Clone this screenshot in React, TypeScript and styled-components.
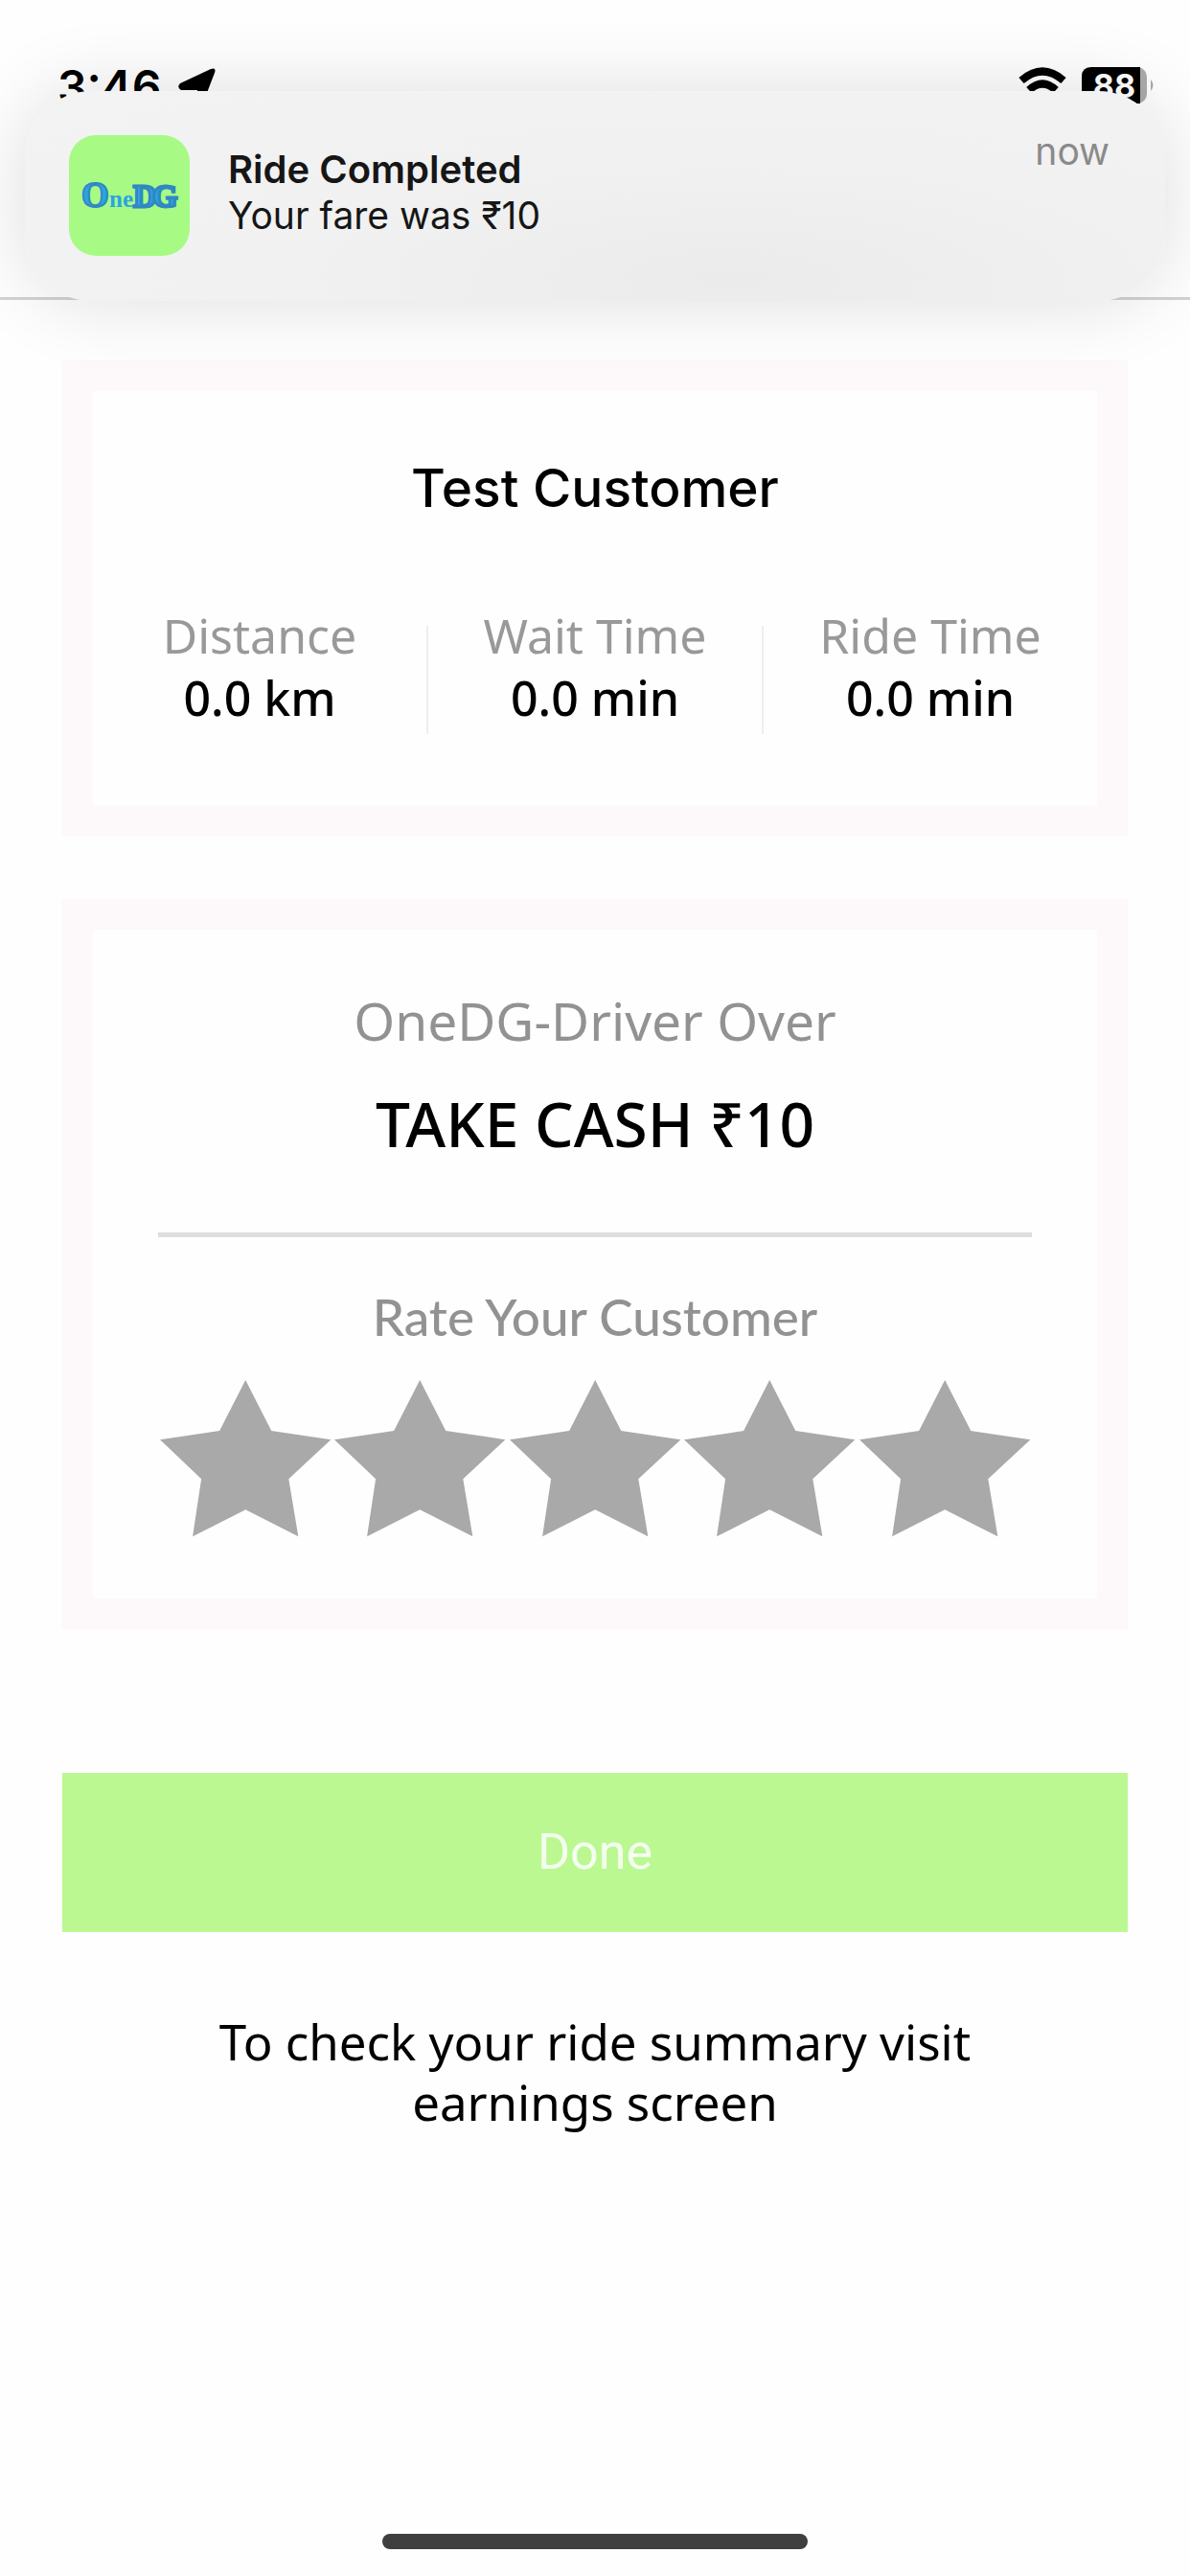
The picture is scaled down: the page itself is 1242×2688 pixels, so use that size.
import React, { useState } from "react";
import styled, { createGlobalStyle } from "styled-components";

const GlobalStyle = createGlobalStyle`
  *, *::before, *::after { box-sizing: border-box; }
  html, body { margin: 0; padding: 0; background: #fefefe; }
  body { font-family: "Noto Sans", "Open Sans", sans-serif; color: #000; }
  h1, h2, p, dl, dd, dt, fieldset, legend { margin: 0; padding: 0; }
`;

const Screen = styled.div`
  min-height: 100vh;
  display: flex;
  flex-direction: column;
  position: relative;
  overflow: hidden;
`;

const Header = styled.header`
  position: relative;
  height: 313px;
  padding-top: 66px;
  border-bottom: 3px solid #d2d2d2;
`;

const StatusBar = styled.div`
  display: flex;
  align-items: flex-start;
  justify-content: space-between;
  height: 48px;
  padding: 0 37px 0 60px;
`;

const StatusGroup = styled.div`
  display: flex;
  align-items: flex-start;
  gap: 16px;
`;

const Clock = styled.time`
  font: 600 48px/50px Inter, sans-serif;
`;

const Banner = styled.section`
  position: absolute;
  z-index: 1;
  top: 95px;
  left: 26px;
  right: 26px;
  height: 219px;
  display: flex;
  align-items: flex-start;
  gap: 40px;
  padding: 46px 58px 46px 46px;
  border-radius: 70px;
  background: radial-gradient(ellipse at 62% 90%, #ebebeb 0%, #f1f1f1 45%, #f3f3f4 100%);
  box-shadow: 0 0 80px rgba(0, 0, 0, 0.13);
  font-family: Inter, sans-serif;
`;

const AppIcon = styled.div`
  display: flex;
  align-items: center;
  justify-content: center;
  flex: none;
  width: 126px;
  height: 126px;
  border-radius: 28px;
  background: #a7fb85;
`;

const BannerText = styled.div`
  flex: 1;
  padding-top: 12px;
`;

const BannerTitle = styled.h2`
  font-size: 40px;
  font-weight: 600;
  line-height: 48px;
  color: #161616;
`;

const BannerBody = styled.p`
  font-size: 39px;
  line-height: 48px;
  color: #161616;
`;

const BannerTime = styled.span`
  font-size: 39px;
  line-height: 34px;
  color: #8a8a8a;
`;

const Main = styled.main`
  display: flex;
  flex-direction: column;
  padding: 63px 65px 0;
`;

const Card = styled.section`
  display: flex;
  flex-direction: column;
  align-items: center;
  margin-bottom: 66px;
  border: 32px solid #fdf8f9;
  background: #fefefe;
  text-align: center;
`;

const CustomerName = styled.h1`
  padding-top: 69px;
  font: 500 55px/64px Inter, sans-serif;
`;

const Stats = styled.dl`
  display: flex;
  width: 100%;
  padding: 112px 0 74px;
`;

const Stat = styled.div`
  flex: 1;
  height: 113px;
  & + & { border-left: 2px solid #eee; }
`;

const StatLabel = styled.dt`
  margin-top: -22px;
  font-size: 50px;
  line-height: 65px;
  color: #999;
`;

const StatValue = styled.dd`
  font-size: 50px;
  font-weight: 500;
  line-height: 65px;
`;

const Caption = styled.p`
  padding-top: 59px;
  font-size: 55px;
  line-height: 72px;
  color: #929292;
`;

const Amount = styled.p`
  padding: 30px 0 71px;
  font-size: 64px;
  font-weight: 500;
  line-height: 84px;
`;

const Rating = styled.fieldset`
  width: calc(100% - 136px);
  border: 0;
  border-top: 5px solid #dedede;
  padding-top: 47px;
  padding-bottom: 59px;
`;

const RatingTitle = styled.p`
  font: 500 53px/72px Lato, sans-serif;
  color: #929292;
`;

const Stars = styled.div`
  display: flex;
  padding-top: 29px;
`;

const StarLabel = styled.label`
  flex: 1;
  position: relative;
  display: flex;
  justify-content: center;
  cursor: pointer;
  svg { display: block; width: 100%; height: auto; }
`;

const StarInput = styled.input`
  position: absolute;
  inset: 0;
  width: 100%;
  height: 100%;
  margin: 0;
  opacity: 0;
  cursor: pointer;
`;

const DoneButton = styled.button`
  margin-top: 84px;
  padding: 51px 0;
  border: 0;
  background: #bcf892;
  color: #f4fff0;
  font: 400 52px/64px Roboto, sans-serif;
  cursor: pointer;
`;

const Hint = styled.p`
  max-width: 900px;
  align-self: center;
  padding-top: 83px;
  font-size: 51px;
  line-height: 63px;
  text-align: center;
`;

const HomeIndicator = styled.div`
  width: 444px;
  height: 16px;
  margin: auto auto 28px;
  border-radius: 8px;
  background: #3f3f3f;
`;

const LocationArrow = () => (
  <svg width="40" height="44" viewBox="0 0 40 44" aria-hidden="true">
    <path d="M35 6 Q41 4 39 10 L29 36 Q25 44 21 37 V28 H4 Q-1 25 3 21Z" fill="#000" />
  </svg>
);

const Wifi = () => (
  <svg width="50" height="40" viewBox="0 0 50 40" aria-hidden="true">
    <g fill="none" stroke="#000" strokeWidth="8">
      <path d="M3 18 Q25 -1 47 18" />
      <path d="M11 28 Q25 15 39 28" />
    </g>
  </svg>
);

const Battery = () => (
  <svg width="76" height="44" viewBox="0 0 76 44" aria-hidden="true">
    <rect x="0" y="4" width="68" height="38" rx="10" fill="#ababab" />
    <path d="M10 4 H61 V42 H10 Q0 42 0 32 V14 Q0 4 10 4Z" fill="#000" />
    <path d="M72 17 Q77 23 72 29Z" fill="#ababab" />
    <text x="34" y="36" textAnchor="middle" fill="#fff" fontFamily="Inter, sans-serif" fontWeight="700" fontSize="34">88</text>
  </svg>
);

const Logo = () => (
  <svg width="104" height="40" viewBox="0 0 104 40" role="img" aria-label="OneDG">
    <g fill="#2aa5e0" stroke="#3187c4" fontFamily="Liberation Serif, serif" fontWeight="700">
      <text x="2" y="32" fontSize="37" strokeWidth="2">O</text>
      <text x="31" y="32" fontSize="25" strokeWidth="0">ne</text>
      <text x="56" y="32" fontSize="34" strokeWidth="3">D</text>
      <text x="76" y="32" fontSize="34" strokeWidth="3">G</text>
    </g>
  </svg>
);

const Star = ({ active }: { active: boolean }) => (
  <svg viewBox="0 0 182 170" aria-hidden="true">
    <path d="M91 1 L118 54 L180 63 L136 104 L146 164 L91 136 L36 164 L45 104 L2 63 L64 54Z" fill={active ? "#f5b800" : "#a9a9a9"} />
  </svg>
);

const stats = [
  { label: "Distance", value: "0.0 km" },
  { label: "Wait Time", value: "0.0 min" },
  { label: "Ride Time", value: "0.0 min" },
];

export default function App() {
  const [rating, setRating] = useState(0);
  return (
    <Screen>
      <GlobalStyle />
      <Header>
        <StatusBar>
          <StatusGroup>
            <Clock>3:46</Clock>
            <LocationArrow />
          </StatusGroup>
          <StatusGroup>
            <Wifi />
            <Battery />
          </StatusGroup>
        </StatusBar>
        <Banner>
          <AppIcon><Logo /></AppIcon>
          <BannerText>
            <BannerTitle>Ride Completed</BannerTitle>
            <BannerBody>Your fare was ₹10</BannerBody>
          </BannerText>
          <BannerTime>now</BannerTime>
        </Banner>
      </Header>
      <Main>
        <Card>
          <CustomerName>Test Customer</CustomerName>
          <Stats>
            {stats.map((s) => (
              <Stat key={s.label}>
                <StatLabel>{s.label}</StatLabel>
                <StatValue>{s.value}</StatValue>
              </Stat>
            ))}
          </Stats>
        </Card>
        <Card>
          <Caption>OneDG-Driver Over</Caption>
          <Amount>TAKE CASH ₹10</Amount>
          <Rating aria-labelledby="rating-title">
            <RatingTitle id="rating-title">Rate Your Customer</RatingTitle>
            <Stars>
              {[1, 2, 3, 4, 5].map((n) => (
                <StarLabel key={n}>
                  <StarInput type="radio" name="rating" aria-label={`${n} stars`} checked={rating === n} onChange={() => setRating(n)} />
                  <Star active={n <= rating} />
                </StarLabel>
              ))}
            </Stars>
          </Rating>
        </Card>
        <DoneButton type="button">Done</DoneButton>
        <Hint>To check your ride summary visit earnings screen</Hint>
      </Main>
      <HomeIndicator />
    </Screen>
  );
}
